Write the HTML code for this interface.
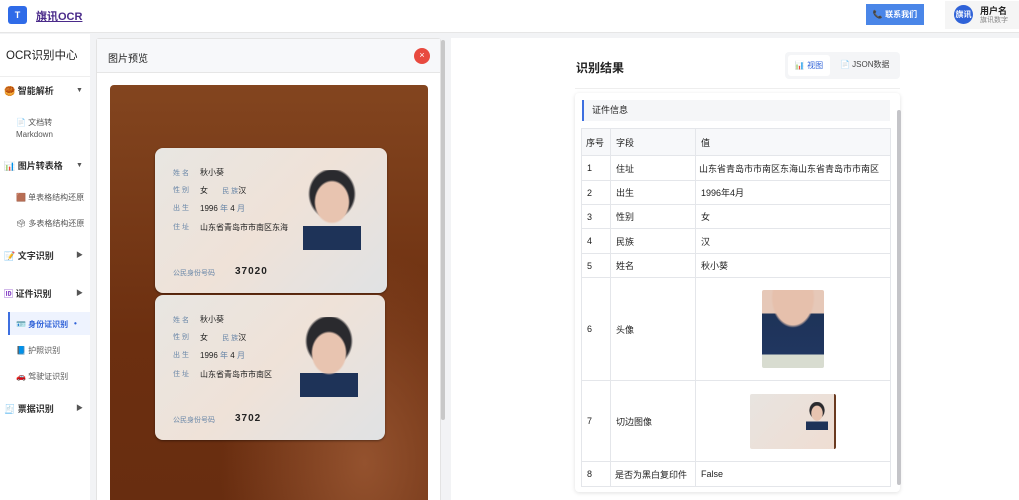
<!DOCTYPE html><html><head><meta charset="utf-8"><style>
*{box-sizing:border-box;margin:0;padding:0}
html,body{width:1019px;height:500px;overflow:hidden}
body{background:#f2f3f5;font-family:"Liberation Sans","Noto Sans CJK SC",sans-serif;color:#222;position:relative}
.abs{position:absolute}
.hdr{left:0;top:0;width:1019px;height:33px;background:#fff;border-bottom:1px solid #e6e6e6}
.side{left:0;top:34px;width:90px;height:466px;background:#fff}
.mi{position:absolute;left:4px;width:86px;font-size:9px;font-weight:bold;color:#333;line-height:12px}
.mi .ar{position:absolute;left:72px;top:0;font-size:7px;color:#555;line-height:12px}
.si{position:absolute;left:16px;font-size:8px;color:#555}
.card{background:#fff;border:1px solid #e3e3e3;border-radius:3px}
.idc{position:absolute;border-radius:8px;background:linear-gradient(135deg,#e8e6e2,#efe2d8 50%,#e0e2e4);box-shadow:0 1px 2px rgba(0,0,0,.4);font-size:8px;color:#222}
.idc .l{position:absolute;color:#6a87a8;font-size:7px}
.idc .v{position:absolute}
.face{position:absolute;width:58px;height:80px}
table{border-collapse:collapse;font-size:9px;color:#222;table-layout:fixed}
td{border:1px solid #e4e6ea;padding:0 5px;white-space:nowrap;overflow:hidden}
</style></head><body>
<div class="abs hdr"></div>
<div class="abs" style="left:8px;top:6px;width:19px;height:18px;background:#2f6be8;border-radius:3px;color:#fff;font-size:9px;font-weight:bold;text-align:center;line-height:18px">T</div>
<div class="abs" style="left:36px;top:8px;font-size:11px;font-weight:bold;color:#4a2a8a;text-decoration:underline">旗讯OCR</div>
<div class="abs" style="left:866px;top:4px;width:58px;height:21px;background:#4a86e8;color:#fff;font-size:8px;font-weight:bold;text-align:center;line-height:21px">📞 联系我们</div>
<div class="abs" style="left:945px;top:1px;width:74px;height:28px;background:#f5f5f5"></div>
<div class="abs" style="left:954px;top:5px;width:19px;height:19px;border-radius:50%;background:#2f62d8;color:#fff;font-size:8px;font-weight:bold;text-align:center;line-height:19px">旗讯</div>
<div class="abs" style="left:980px;top:4px;font-size:9px;font-weight:bold">用户名</div>
<div class="abs" style="left:980px;top:15px;font-size:7px;color:#888">旗讯数字</div>

<div class="abs side"></div>
<div class="abs" style="left:6px;top:47px;font-size:11.5px">OCR识别中心</div>
<div class="abs" style="left:0;top:76px;width:90px;border-top:1px solid #eee"></div>
<div class="mi" style="top:85px">🥮 智能解析<span class="ar">▼</span></div>
<div class="si" style="top:117px;line-height:12px">📄 文档转<br>Markdown</div>
<div class="mi" style="top:160px">📊 图片转表格<span class="ar">▼</span></div>
<div class="si" style="top:192px">🟫 单表格结构还原</div>
<div class="si" style="top:218px">🗳 多表格结构还原</div>
<div class="mi" style="top:250px">📝 文字识别<span class="ar">▶</span></div>
<div class="mi" style="top:288px"><span style="color:#8a4ac8">🆔</span> 证件识别<span class="ar">▶</span></div>
<div class="abs" style="left:8px;top:312px;width:82px;height:23px;background:#eef3fe;border-left:2px solid #3d6fe0"></div>
<div class="si" style="top:319px;color:#2f62d8;font-weight:bold">🪪 身份证识别<span style="position:absolute;left:58px">•</span></div>
<div class="si" style="top:345px">📘 护照识别</div>
<div class="si" style="top:371px">🚗 驾驶证识别</div>
<div class="mi" style="top:403px">🧾 票据识别<span class="ar">▶</span></div>

<div class="abs card" style="left:96px;top:38px;width:345px;height:470px"></div>
<div class="abs" style="left:97px;top:39px;width:343px;height:34px;background:#f7f8fa;border-bottom:1px solid #e6e6e6"></div>
<div class="abs" style="left:108px;top:50px;font-size:10px">图片预览</div>
<div class="abs" style="left:414px;top:48px;width:16px;height:16px;border-radius:50%;background:#e84a3f;color:#fff;font-size:9px;text-align:center;line-height:15px">×</div>
<div class="abs" style="left:441px;top:40px;width:4px;height:380px;background:#c8c8c8;border-radius:2px"></div>
<div class="abs" style="left:110px;top:85px;width:318px;height:420px;border-radius:4px;background:radial-gradient(ellipse at 80% 90%,#94522e,transparent 40%),linear-gradient(180deg,#83451f,#6c2f10 60%,#682d10)"></div>
<div class="idc" style="left:155px;top:148px;width:232px;height:145px">
<span class="l" style="left:18px;top:20px">姓 名</span><span class="v" style="left:45px;top:19px">秋小葵</span>
<span class="l" style="left:18px;top:37px">性 别</span><span class="v" style="left:45px;top:37px">女 <span style="color:#6a87a8;font-size:7px;margin-left:12px">民 族</span>汉</span>
<span class="l" style="left:18px;top:55px">出 生</span><span class="v" style="left:45px;top:55px">1996 <span style="color:#6a87a8">年</span> 4 <span style="color:#6a87a8">月</span></span>
<span class="l" style="left:18px;top:74px">住 址</span><span class="v" style="left:45px;top:74px">山东省青岛市市南区东海</span>
<span class="l" style="left:18px;top:120px">公民身份号码</span><span class="v" style="left:80px;top:118px;font-size:10px;font-weight:bold;letter-spacing:1px">37020</span>
<div class="face" style="left:148px;top:22px;background:radial-gradient(ellipse 18px 22px at 50% 40%,#e8c4b0 90%,transparent),radial-gradient(ellipse 24px 26px at 50% 30%,#2a2a2e 90%,transparent),linear-gradient(180deg,transparent 70%,#1e3358 70%)"></div>
</div>
<div class="idc" style="left:155px;top:295px;width:230px;height:145px">
<span class="l" style="left:18px;top:20px">姓 名</span><span class="v" style="left:45px;top:19px">秋小葵</span>
<span class="l" style="left:18px;top:37px">性 别</span><span class="v" style="left:45px;top:37px">女 <span style="color:#6a87a8;font-size:7px;margin-left:12px">民 族</span>汉</span>
<span class="l" style="left:18px;top:55px">出 生</span><span class="v" style="left:45px;top:55px">1996 <span style="color:#6a87a8">年</span> 4 <span style="color:#6a87a8">月</span></span>
<span class="l" style="left:18px;top:74px">住 址</span><span class="v" style="left:45px;top:74px">山东省青岛市市南区</span>
<span class="l" style="left:18px;top:120px">公民身份号码</span><span class="v" style="left:80px;top:118px;font-size:10px;font-weight:bold;letter-spacing:1px">3702</span>
<div class="face" style="left:145px;top:22px;background:radial-gradient(ellipse 18px 22px at 50% 45%,#e8c4b0 90%,transparent),radial-gradient(ellipse 24px 26px at 50% 30%,#2a2a2e 90%,transparent),linear-gradient(180deg,transparent 70%,#1e3358 70%)"></div>
</div>

<div class="abs" style="left:451px;top:38px;width:568px;height:462px;background:#fff"></div>
<div class="abs" style="left:576px;top:59px;font-size:12px;font-weight:bold">识别结果</div>
<div class="abs" style="left:785px;top:52px;width:115px;height:27px;background:#f4f5f7;border-radius:4px"></div>
<div class="abs" style="left:788px;top:55px;width:42px;height:21px;background:#fff;border-radius:3px;font-size:8px;color:#2f62d8;text-align:center;line-height:21px">📊 视图</div>
<div class="abs" style="left:840px;top:59px;font-size:8px;color:#444">📄 JSON数据</div>
<div class="abs" style="left:575px;top:88px;width:325px;border-top:1px solid #eee"></div>
<div class="abs" style="left:575px;top:93px;width:325px;height:399px;background:#fff;border-radius:4px;box-shadow:0 1px 4px rgba(0,0,0,.12)"></div>
<div class="abs" style="left:582px;top:100px;width:308px;height:21px;background:#f5f6f8;border-left:2px solid #3d6fe0;font-size:9px;line-height:21px;padding-left:8px">证件信息</div>
<div class="abs" style="left:897px;top:110px;width:4px;height:375px;background:#c4c4c8;border-radius:2px"></div>
<table class="abs" style="left:581px;top:128px;width:309px">
<tr style="height:27px;background:#f7f8fa"><td style="width:29px;padding:0 4px">序号</td><td style="width:85px">字段</td><td style="width:195px">值</td></tr>
<tr style="height:25px"><td>1</td><td>住址</td><td style="padding:0 3px">山东省青岛市市南区东海山东省青岛市市南区</td></tr>
<tr style="height:24px"><td>2</td><td>出生</td><td>1996年4月</td></tr>
<tr style="height:24px"><td>3</td><td>性别</td><td>女</td></tr>
<tr style="height:25px"><td>4</td><td>民族</td><td>汉</td></tr>
<tr style="height:24px"><td>5</td><td>姓名</td><td>秋小葵</td></tr>
<tr style="height:103px"><td>6</td><td>头像</td><td><div style="margin:0 auto;width:62px;height:78px;border-radius:2px;background:radial-gradient(ellipse 22px 30px at 50% 10%,#e6c0ac 90%,transparent),linear-gradient(180deg,#e6c8b8 30%,#1e3358 30%,#203660 83%,#d8dcd0 83%)"></div></td></tr>
<tr style="height:81px"><td>7</td><td>切边图像</td><td><div style="margin:0 auto;width:86px;height:55px;border-radius:2px;background:linear-gradient(135deg,#e8e4e0,#efddd2);border-right:2px solid #6a3a20;position:relative"><div style="position:absolute;left:56px;top:8px;width:22px;height:28px;background:radial-gradient(ellipse 6px 8px at 50% 40%,#e8c4b0 90%,transparent),radial-gradient(ellipse 8px 9px at 50% 30%,#2a2a2e 90%,transparent),linear-gradient(180deg,transparent 70%,#1e3358 70%)"></div></div></td></tr>
<tr style="height:25px"><td>8</td><td style="padding:0 4px">是否为黑白复印件</td><td>False</td></tr>
</table>
</body></html>
